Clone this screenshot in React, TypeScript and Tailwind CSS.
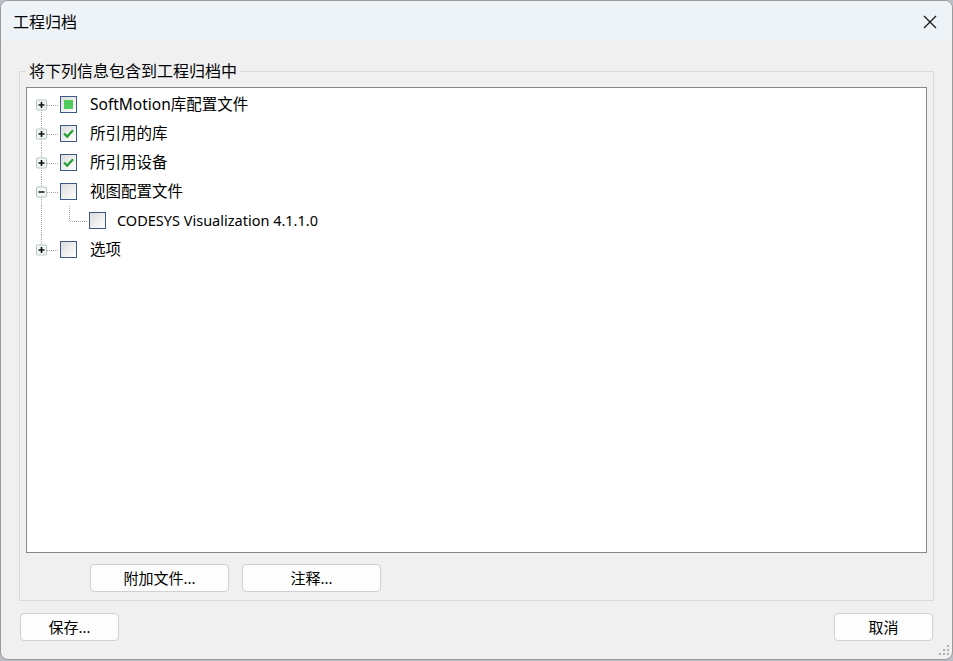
import React from "react";

type CheckState = "partial" | "checked" | "none";

const font = { fontFamily: '"Noto Sans", "Noto Sans CJK SC", sans-serif' };

const Expander = ({ open }: { open: boolean }) => (
  <g>
    <rect x="9.5" y="10" width="10" height="10" rx="1" fill="#f4f6f6" stroke="#b3c6c9" />
    <line x1="11.5" y1="15" x2="17.5" y2="15" stroke="#111" strokeWidth="1.6" />
    {!open && <line x1="14.5" y1="12" x2="14.5" y2="18" stroke="#111" strokeWidth="1.6" />}
  </g>
);

const dot = { stroke: "#a8a8a8", strokeDasharray: "1 1", strokeWidth: 1 };

// gutter drawing: vertical trunk, elbow to checkbox, expander
const Gutter = ({
  first,
  last,
  open,
}: {
  first?: boolean;
  last?: boolean;
  open: boolean;
}) => (
  <svg width="33" height="29" className="shrink-0">
    <line x1="14.5" y1={first ? 20 : 0} x2="14.5" y2={last ? 10 : 29} {...dot} />
    <line x1="20" y1="15.5" x2="31" y2="15.5" {...dot} />
    <Expander open={open} />
  </svg>
);

const ChildGutter = () => (
  <svg width="62" height="29" className="shrink-0">
    <line x1="14.5" y1="0" x2="14.5" y2="29" {...dot} />
    <line x1="42.5" y1="0" x2="42.5" y2="15" {...dot} />
    <line x1="43" y1="15.5" x2="60" y2="15.5" {...dot} />
  </svg>
);

const Check = ({ state }: { state: CheckState }) => (
  <div className="w-[17px] h-[17px] shrink-0 border border-[#3d5a84] bg-gradient-to-br from-[#dcdcdc] to-[#ffffff] flex items-center justify-center">
    {state === "partial" && <div className="w-[9px] h-[9px] bg-[#4fcc5c]" />}
    {state === "checked" && (
      <svg width="13" height="13" viewBox="0 0 13 13">
        <path d="M2 6.5 L5.2 9.6 L11 3.2" fill="none" stroke="#21a136" strokeWidth="2.2" />
      </svg>
    )}
  </div>
);

const rows: { label: string; state: CheckState; open?: boolean }[] = [
  { label: "SoftMotion库配置文件", state: "partial" },
  { label: "所引用的库", state: "checked" },
  { label: "所引用设备", state: "checked" },
  { label: "视图配置文件", state: "none", open: true },
];

const Btn = ({ children, className }: { children: React.ReactNode; className: string }) => (
  <button
    className={`h-[28px] rounded-[4px] border border-[#d0d0d0] bg-[#fdfdfd] text-[15px] text-black flex items-center justify-center ${className}`}
  >
    {children}
  </button>
);

export default function App() {
  return (
    <div className="w-[953px] h-[661px] bg-[#b9bfc6]" style={font}>
      <div className="w-[953px] h-[660px] rounded-[8px] border border-[#9a9a9a] bg-[#f0f0f0] flex flex-col overflow-hidden">
        {/* title bar */}
        <div className="h-[41px] bg-[#eef3f8] flex items-center justify-between pl-[12px] pr-[15px] shrink-0">
          <span className="text-[16px] text-black">工程归档</span>
          <svg width="14" height="14" viewBox="0 0 14 14">
            <path d="M1 1 L13 13 M13 1 L1 13" stroke="#1a1a1a" strokeWidth="1.3" />
          </svg>
        </div>

        <div className="flex-1 flex flex-col px-[18px] pt-[19px] pb-[18px]">
          {/* group box */}
          <fieldset className="border border-[#dadada] mx-0 px-[6px] pb-[7px] pt-0 h-[540px] flex flex-col">
            <legend className="ml-0 px-[3px] text-[16px] text-black leading-[20px]">
              将下列信息包含到工程归档中
            </legend>
            <div className="h-[466px] mt-[6px] border border-[#868686] bg-white pt-[2px]">
              {rows.map((r, i) => (
                <React.Fragment key={r.label}>
                  <div className="h-[29px] flex items-center">
                    <Gutter first={i === 0} open={!!r.open} />
                    <Check state={r.state} />
                    <span className="ml-[13px] text-[15.5px] text-black leading-none">{r.label}</span>
                  </div>
                  {r.open && (
                    <div className="h-[29px] flex items-center">
                      <ChildGutter />
                      <Check state="none" />
                      <span className="ml-[11px] text-[14.5px] text-black leading-none">
                        CODESYS Visualization 4.1.1.0
                      </span>
                    </div>
                  )}
                </React.Fragment>
              ))}
              <div className="h-[29px] flex items-center">
                <Gutter last open={false} />
                <Check state="none" />
                <span className="ml-[13px] text-[15.5px] text-black leading-none">选项</span>
              </div>
            </div>
            <div className="flex gap-[13px] mt-[11px] pl-[64px]">
              <Btn className="w-[139px]">附加文件...</Btn>
              <Btn className="w-[139px]">注释...</Btn>
            </div>
          </fieldset>

          <div className="flex justify-between mt-[12px] pl-[1px] pr-[1px]">
            <Btn className="w-[99px]">保存...</Btn>
            <Btn className="w-[99px]">取消</Btn>
          </div>
        </div>
      </div>
      {/* resize grip */}
      <div className="relative">
        <svg width="12" height="12" className="absolute right-[3px] bottom-[4px]">
          {[
            [9, 1],
            [5, 5],
            [9, 5],
            [1, 9],
            [5, 9],
            [9, 9],
          ].map(([x, y]) => (
            <rect key={`${x}-${y}`} x={x} y={y} width="2" height="2" fill="#b0b0b0" />
          ))}
        </svg>
      </div>
    </div>
  );
}
